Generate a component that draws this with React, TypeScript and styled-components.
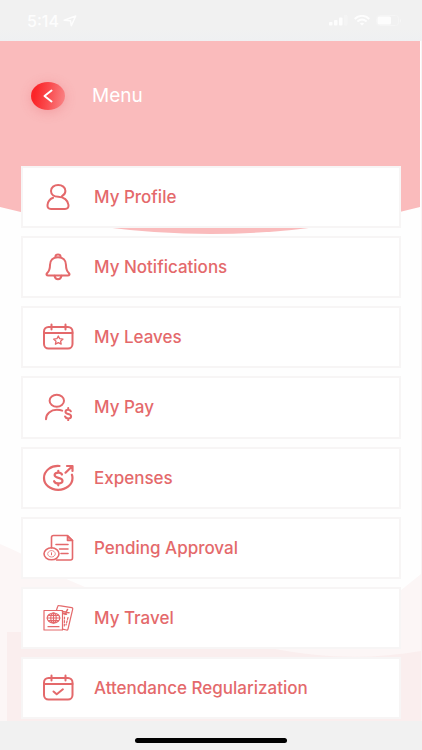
import React from "react";
import styled, { createGlobalStyle } from "styled-components";

const GlobalStyle = createGlobalStyle`
  * { box-sizing: border-box; }
  body {
    margin: 0;
    background: #f1f1f1;
    font-family: Inter, "Liberation Sans", sans-serif;
  }
`;

const Screen = styled.div`
  display: flex;
  flex-direction: column;
  min-height: 100vh;
`;

const StatusBar = styled.div`
  display: flex;
  align-items: center;
  justify-content: space-between;
  height: 41px;
  padding: 0 20px 0 27px;
  background: linear-gradient(#f1f1f1 70%, #eff0f2);
  color: #fdfdfd;
`;

const StatusGroup = styled.div<{ $gap: number }>`
  display: flex;
  align-items: center;
  gap: ${(p) => p.$gap}px;
`;

const Time = styled.span`
  font-size: 16px;
  line-height: 20px;
  font-weight: 500;
`;

const Main = styled.main`
  position: relative;
  display: flex;
  flex: 1;
  flex-direction: column;
  background: #fefefe;
  border-right: 1px solid #f8f3f3;
`;

const Backdrop = styled.svg`
  position: absolute;
  inset: 0;
  width: 100%;
  height: 100%;
`;

const Header = styled.header`
  position: relative;
  display: flex;
  align-items: center;
  gap: 27px;
  height: 109px;
  padding-left: 31px;
`;

const BackButton = styled.button`
  display: flex;
  align-items: center;
  justify-content: center;
  width: 34px;
  height: 28px;
  padding: 0;
  border: 0;
  border-radius: 50%;
  background: linear-gradient(100deg, #fb2529 15%, #fa4a4d 50%, #f98284 95%);
  box-shadow: 0 2px 12px rgba(225, 80, 90, 0.28);
  cursor: pointer;
`;

const Title = styled.h1`
  margin: 0;
  color: #fff;
  font-size: 19px;
  line-height: 24px;
  font-weight: 400;
`;

const MenuList = styled.ul`
  position: relative;
  display: grid;
  flex: 1;
  grid-auto-rows: minmax(62px, 1fr);
  gap: 8px;
  margin: 0;
  padding: 16px 20px 2px 21px;
  list-style: none;
`;

const MenuLink = styled.a`
  display: flex;
  align-items: center;
  gap: 19px;
  height: 100%;
  padding-left: 18px;
  border: 2px solid #f7f5f5;
  background: #fff;
  color: #e4696b;
  font-size: 17px;
  line-height: 20px;
  font-weight: 500;
  text-decoration: none;
`;

const Icon = styled.svg`
  flex: none;
  width: 34px;
  height: 28px;
  fill: none;
  stroke: #e4696b;
  stroke-width: 2;
  stroke-linecap: round;
  stroke-linejoin: round;
`;

const HomeBar = styled.footer`
  display: flex;
  justify-content: center;
  height: 29px;
  padding-top: 17px;
`;

const HomeIndicator = styled.div`
  width: 36%;
  height: 5px;
  border-radius: 3px;
  background: #000;
`;

const ProfileIcon = () => (
  <path d="M21 13.2C23 12 24.4 10.300 24.400 8c0-3.600-3.200-6-7.200-6S10 4.400 10 8c0 3.500 3 5.800 7.200 5.800 5.600 0 9.800 3.400 10.300 8.200.2 2.600-.8 4-3.500 4H10c-2.700 0-3.700-1.400-3.500-4 .3-3.300 2.400-5.900 5.600-7.200" />
);

const BellIcon = () => (
  <>
    <path d="M14.500 4.500V3.200c0-1 1-1.700 2.500-1.700s2.500.7 2.500 1.700v1.300M17 4.200c-4.800 0-8 3.100-8 7.800 0 5-1.200 6.500-2.800 8-1.300 1.400-.6 2.500 1 2.500h19.600c1.600 0 2.300-1.100 1-2.500-1.600-1.500-2.800-3-2.800-8 0-4.700-3.200-7.800-8-7.800Z" />
    <path d="M13.500 22.800c.4 2.200 1.600 3.400 3.500 3.400s3.100-1.200 3.500-3.400" />
  </>
);

const CalendarFrame = () => (
  <>
    <rect x="3" y="4" width="28.500" height="21.500" rx="4.500" />
    <path d="M3 10h28.500M10.500 1.500v5M24.500 1.500v5" />
  </>
);

const LeavesIcon = () => (
  <>
    <CalendarFrame />
    <path
      strokeWidth="1.300"
      d="m17.300 13 1.400 2.700 3.300.4-2.400 2.100.6 3-2.900-1.500-2.900 1.500.6-3-2.400-2.100 3.300-.4Z"
    />
  </>
);

const AttendanceIcon = () => (
  <>
    <CalendarFrame />
    <path d="m12.500 17.500 3.200 2.800 6.200-5" />
  </>
);

const PayIcon = () => (
  <>
    <ellipse cx="15.800" cy="7.800" rx="7.200" ry="6" />
    <path d="M5 26.200c0-5.500 4.800-9.400 10.800-9.400 2 0 3.800.2 5.400.9" />
    <path d="M29.800 18.300c-.5-1-1.400-1.500-2.700-1.500-1.600 0-2.600.8-2.600 2.100 0 2.800 5.600 1.300 5.600 4.300 0 1.400-1.200 2.200-2.900 2.200-1.500 0-2.600-.7-3.100-1.900M27.200 15v1.500M27.200 25.700v1.500" />
  </>
);

const ExpensesIcon = () => (
  <g strokeWidth="2.200">
    <path d="M18.500 2C10 1.300 3 6.700 3 14c0 6.700 6.200 11.800 14.200 11.800S31.500 20.700 31.500 14c0-1.200-.2-2.300-.6-3.300" />
    <path d="m24.500 8.700 6.500-6.200M26 2h5.500v5" />
    <path d="M21 10.500c-.5-1.200-1.900-1.900-3.700-1.900-2.200 0-3.700.9-3.700 2.500 0 3.700 7.900 1.700 7.900 5.600 0 1.800-1.800 2.700-4.100 2.700-2 0-3.700-.8-4.300-2.200M17.300 6.800v1.500M17.300 19.800v1.500" />
  </g>
);

const ApprovalIcon = () => (
  <g strokeWidth="1.600">
    <path d="M10.500 14V3.500c0-1.500.5-2 2-2h14l5 5V24c0 1.500-.5 2-2 2h-14" />
    <path fill="#f0a5a6" d="M26.500 1.800v4.700h5Z" />
    <path d="M15 10.500h12M18.500 15H27M20 19.500h7" />
    <ellipse cx="10.500" cy="19.800" rx="7.500" ry="6" />
    <ellipse cx="10.500" cy="19.800" rx="3.800" ry="3.200" strokeWidth="0.800" strokeDasharray="2 1" />
    <path strokeWidth="1" d="M10.500 18.800v2" />
  </g>
);

const TravelIcon = () => (
  <g strokeWidth="1.200">
    <path d="M3 6.500h18.500V26H3Z" />
    <ellipse cx="12.500" cy="14" rx="6.300" ry="5" />
    <ellipse cx="12.500" cy="14" rx="2.700" ry="5" />
    <path d="M6.200 14h12.600M7.500 11.300h10M7.500 16.700h10M12.500 9v10M7 22.700h11" />
    <path d="m15.500 6 1.200-3.500c.2-.8.700-1 1.500-.8l12.500 2c.9.200 1.200.6 1 1.400L27 25c-.2.800-.7 1.200-1.500 1l-4-.8" />
    <path strokeWidth="1.600" d="m21.500 7.500 6.500 1.200M26.500 5.500l-2.600 5M22 9.500l3.500.7" />
    <path strokeDasharray="2 1.500" d="m23.500 13-.2 9M27 13.500l-2 7.500" />
  </g>
);

const items = [
  { label: "My Profile", Glyph: ProfileIcon },
  { label: "My Notifications", Glyph: BellIcon },
  { label: "My Leaves", Glyph: LeavesIcon },
  { label: "My Pay", Glyph: PayIcon },
  { label: "Expenses", Glyph: ExpensesIcon },
  { label: "Pending Approval", Glyph: ApprovalIcon },
  { label: "My Travel", Glyph: TravelIcon },
  { label: "Attendance Regularization", Glyph: AttendanceIcon },
];

export default function App() {
  return (
    <Screen>
      <GlobalStyle />
      <StatusBar>
        <StatusGroup $gap={4}>
          <Time>5:14</Time>
          <svg width="14" height="12" viewBox="0 0 14 12" fill="none" stroke="currentColor" strokeWidth="1.500" strokeLinejoin="round" aria-hidden="true">
            <path d="M1.200 5.200 12.700 1 8.300 10.800 7.500 5.800Z" />
          </svg>
        </StatusGroup>
        <StatusGroup $gap={6}>
          <svg width="19" height="11" viewBox="0 0 19 11" fill="currentColor" aria-hidden="true">
            <rect x="0" y="7" width="3.500" height="3.500" rx="1" />
            <rect x="5" y="5" width="3.500" height="5.500" rx="1" />
            <rect x="10" y="2.500" width="3.500" height="8" rx="1" />
            <rect x="15" y="0" width="3.500" height="10.500" rx="1" opacity="0.300" />
          </svg>
          <svg width="16" height="11" viewBox="0 0 16 11" fill="none" stroke="currentColor" strokeWidth="2" aria-hidden="true">
            <path d="M.7 4C5-.2 11-.2 15.300 4M3.400 6.500c2.800-2.400 6.400-2.400 9.200 0" />
            <path d="m8 10.500-2.200-2c1.300-1 3.100-1 4.400 0Z" fill="currentColor" stroke="none" />
          </svg>
          <svg width="26" height="11" viewBox="0 0 26 11" aria-hidden="true">
            <rect x="0.500" y="0.500" width="22" height="10" rx="3" fill="none" stroke="currentColor" opacity="0.400" />
            <rect x="1.500" y="1.500" width="13.500" height="8" rx="1.500" fill="currentColor" />
            <path d="M24 4v3.500c1.500-.7 1.500-2.800 0-3.500Z" fill="currentColor" opacity="0.500" />
          </svg>
        </StatusGroup>
      </StatusBar>
      <Main>
        <Backdrop viewBox="0 0 421 680" preserveAspectRatio="none" aria-hidden="true">
          <path fill="#fabbbc" d="M0 0h420v166Q211 220 0 166Z" />
          <path fill="#fcf6f6" d="M0 503Q14 509 24 514Q50 532 85 546C180 572 330 600 400 550L421 533V680H0Z" />
          <path fill="#faeeee" d="M7 591C90 591 210 597 270 607C320 617 370 619 421 610V680H7Z" />
        </Backdrop>
        <Header>
          <BackButton type="button" aria-label="Back">
            <svg width="12" height="16" viewBox="0 0 12 16" fill="none" stroke="#fff" strokeWidth="2" strokeLinecap="round" strokeLinejoin="round" aria-hidden="true">
              <path d="M9.500 2.500 2.500 8l7 5.500" />
            </svg>
          </BackButton>
          <Title>Menu</Title>
        </Header>
        <MenuList>
          {items.map(({ label, Glyph }) => (
            <li key={label}>
              <MenuLink href="#">
                <Icon viewBox="0 0 34 28" aria-hidden="true">
                  <Glyph />
                </Icon>
                {label}
              </MenuLink>
            </li>
          ))}
        </MenuList>
      </Main>
      <HomeBar>
        <HomeIndicator />
      </HomeBar>
    </Screen>
  );
}
